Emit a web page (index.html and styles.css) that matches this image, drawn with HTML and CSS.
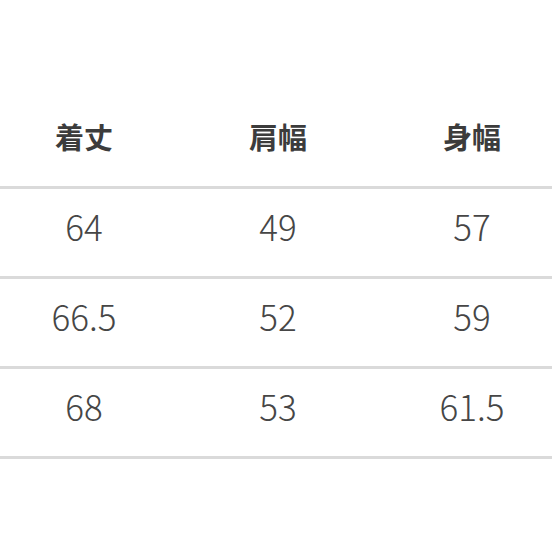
FILE: index.html
```html
<!DOCTYPE html>
<html lang="ja">
<head>
<meta charset="utf-8">
<link rel="stylesheet" href="styles.css">
</head>
<body>
<div class="table">
  <div class="row head">
    <div class="cell">着丈</div>
    <div class="cell">肩幅</div>
    <div class="cell">身幅</div>
  </div>
  <div class="row">
    <div class="cell">64</div>
    <div class="cell">49</div>
    <div class="cell">57</div>
  </div>
  <div class="row">
    <div class="cell">66.5</div>
    <div class="cell">52</div>
    <div class="cell">59</div>
  </div>
  <div class="row">
    <div class="cell">68</div>
    <div class="cell">53</div>
    <div class="cell">61.5</div>
  </div>
</div>
</body>
</html>
```
FILE: styles.css
```css
html, body {
  margin: 0;
  padding: 0;
  background: #ffffff;
}
body {
  width: 552px;
  height: 552px;
  overflow: hidden;
}
.table {
  width: 582px;
  margin-left: -13px;
  padding-top: 95px;
  font-family: "Noto Sans CJK JP", "Noto Sans", sans-serif;
}
.row {
  display: grid;
  grid-template-columns: repeat(3, 1fr);
  height: 87px;
  align-items: center;
  border-bottom: 3px solid #dadada;
  color: #464646;
  font-size: 35px;
  font-weight: 300;
}
.row .cell {
  padding-bottom: 14px;
}
.row.head {
  height: 91px;
  font-size: 29px;
  font-weight: 700;
  color: #3c3c3c;
}
.row.head .cell {
  padding-bottom: 8px;
}
.cell {
  text-align: center;
  line-height: 1;
}
```
